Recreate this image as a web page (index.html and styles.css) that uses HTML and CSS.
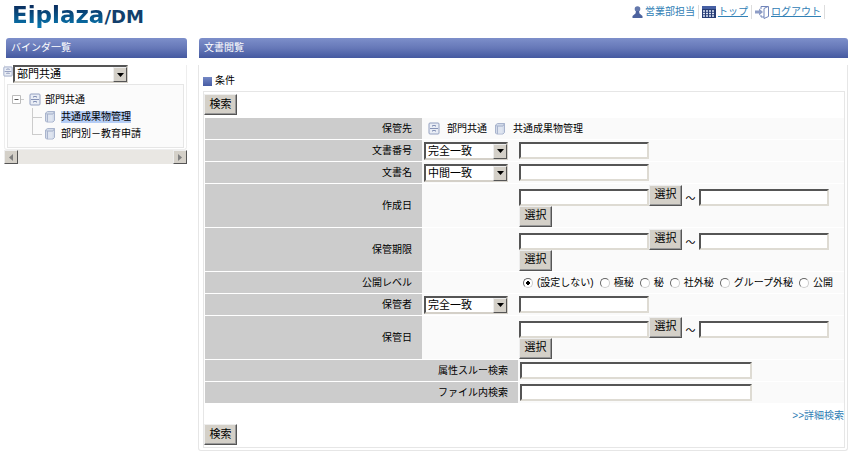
FILE: index.html
```html
<!DOCTYPE html>
<html lang="ja">
<head>
<meta charset="utf-8">
<title>Eiplaza/DM</title>
<link rel="stylesheet" href="styles.css">
</head>
<body>
<svg class="defs" width="0" height="0" aria-hidden="true">
  <symbol id="cabinet" viewBox="0 0 12 13">
    <rect x="1" y="1" width="10" height="11" rx="1" fill="#e9edf5" stroke="#93a0c0"/>
    <path d="M2 6.500h8M4.500 4.500v-1h3v1M4.500 9.500v-1h3v1" fill="none" stroke="#8592b6"/>
  </symbol>
  <symbol id="binder" viewBox="0 0 12 13">
    <path d="M1.500 3l2-1.500h7v9L9 12H2.500l-1-1z" fill="#d3dbe9" stroke="#a9b4cd"/>
    <path d="M1.500 3l1 1H9l1.500-2.500M3.500 4v8" fill="none" stroke="#a9b4cd"/>
    <path d="M4 5h4.500v6.500H4z" fill="#dfe5f0"/>
  </symbol>
  <symbol id="down" viewBox="0 0 7 4"><path d="M0 0h7L3.500 4z" fill="#000"/></symbol>
</svg>
<header class="top">
  <h1 class="logo"><span class="brand">Eiplaza</span><span class="edition">/DM</span></h1>
  <nav class="links">
    <span class="link-item"><svg width="11" height="12" viewBox="0 0 11 12"><circle cx="5.500" cy="3" r="2.800" fill="#6478ac"/><path d="M4 5h3l.5 2.500L10.500 10v2H.5v-2l3-2.500z" fill="#4c629e"/></svg><span>営業部担当</span></span>
    <span class="link-item"><svg width="14" height="12" viewBox="0 0 14 12"><path d="M0 0h14v12H0z" fill="#263c74"/><path d="M0 0h14v3H0z" fill="#4660a4"/><path d="M1 5h12M1 7.500h12M1 10h12" stroke="#e1e7f5" stroke-width="1.500" stroke-dasharray="2 1"/></svg><a href="#">トップ</a></span>
    <span class="link-item"><svg width="14" height="13" viewBox="0 0 14 13"><path d="M6 3V.5h7.500v10L9 12.500V2.500L13 .5M6 9v2h3" fill="none" stroke="#7185ba"/><path d="M0 4.500h4V2.500l4 3.500-4 3.500v-2H0z" fill="#8e9dc6"/></svg><a href="#">ログアウト</a></span>
  </nav>
</header>
<div class="columns">
  <aside class="sidebar">
    <h2 class="bar">バインダ一覧</h2>
    <div class="side-body">
      <div class="chooser">
        <svg width="10" height="13"><use href="#cabinet"/></svg>
        <span class="select select-side"><select aria-label="バインダ"><option>部門共通</option></select><span class="arrow"><svg width="7" height="4"><use href="#down"/></svg></span></span>
      </div>
      <div class="tree">
        <div class="node root"><svg width="12" height="9" viewBox="0 0 12 9"><path d="M.5.500h8v8h-8z" fill="#fff" stroke="#bbb"/><path d="M2.500 4.500h4" stroke="#555"/><path d="M9 4.500h3" stroke="#ccc"/></svg><svg width="12" height="13"><use href="#cabinet"/></svg><span>部門共通</span></div>
        <ul>
          <li class="node"><svg width="12" height="13"><use href="#binder"/></svg><span class="current">共通成果物管理</span></li>
          <li class="node"><svg width="12" height="13"><use href="#binder"/></svg><span>部門別－教育申請</span></li>
        </ul>
      </div>
    </div>
    <div class="scroll">
      <button type="button" aria-label="左へ"><svg width="4" height="7" viewBox="0 0 4 7"><path d="M4 0v7L0 3.500z" fill="#808080"/></svg></button>
      <button type="button" aria-label="右へ"><svg width="4" height="7" viewBox="0 0 4 7"><path d="M0 0v7l4-3.500z" fill="#808080"/></svg></button>
    </div>
  </aside>
  <main>
    <h2 class="bar">文書閲覧</h2>
    <form class="panel">
      <h3>条件</h3>
      <div class="box">
        <button type="button" class="btn">検索</button>
        <table>
          <colgroup><col class="c-label"><col class="c-mode"><col></colgroup>
          <tr><th scope="row">保管先</th><td colspan="2"><span class="path"><svg width="12" height="13"><use href="#cabinet"/></svg><span>部門共通</span><svg width="12" height="13"><use href="#binder"/></svg><span>共通成果物管理</span></span></td></tr>
          <tr><th scope="row"><label for="no">文書番号</label></th><td><span class="select"><select aria-label="文書番号の一致"><option>完全一致</option></select><span class="arrow"><svg width="7" height="4"><use href="#down"/></svg></span></span></td><td><input id="no" type="text"></td></tr>
          <tr><th scope="row"><label for="name">文書名</label></th><td><span class="select"><select aria-label="文書名の一致"><option>中間一致</option></select><span class="arrow"><svg width="7" height="4"><use href="#down"/></svg></span></span></td><td><input id="name" type="text"></td></tr>
          <tr class="tall"><th scope="row"><label for="made">作成日</label></th><td></td><td><div class="range"><input id="made" type="text"><button type="button" class="btn">選択</button><span class="tilde">～</span><input type="text" aria-label="作成日の終わり"></div><button type="button" class="btn">選択</button></td></tr>
          <tr class="tall"><th scope="row"><label for="limit">保管期限</label></th><td></td><td><div class="range"><input id="limit" type="text"><button type="button" class="btn">選択</button><span class="tilde">～</span><input type="text" aria-label="保管期限の終わり"></div><button type="button" class="btn">選択</button></td></tr>
          <tr><th scope="row">公開レベル</th><td></td><td><div class="radios"><label><input type="radio" name="lv" checked>(設定しない)</label><label><input type="radio" name="lv">極秘</label><label><input type="radio" name="lv">秘</label><label><input type="radio" name="lv">社外秘</label><label><input type="radio" name="lv">グループ外秘</label><label><input type="radio" name="lv">公開</label></div></td></tr>
          <tr><th scope="row"><label for="keeper">保管者</label></th><td><span class="select"><select aria-label="保管者の一致"><option>完全一致</option></select><span class="arrow"><svg width="7" height="4"><use href="#down"/></svg></span></span></td><td><input id="keeper" type="text"></td></tr>
          <tr class="tall"><th scope="row"><label for="kept">保管日</label></th><td></td><td><div class="range"><input id="kept" type="text"><button type="button" class="btn">選択</button><span class="tilde">～</span><input type="text" aria-label="保管日の終わり"></div><button type="button" class="btn">選択</button></td></tr>
          <tr><th scope="row" colspan="2"><label for="attr">属性スルー検索</label></th><td><input class="long" id="attr" type="text"></td></tr>
          <tr><th scope="row" colspan="2"><label for="infile">ファイル内検索</label></th><td><input class="long" id="infile" type="text"></td></tr>
        </table>
        <a class="detail" href="#">&gt;&gt;詳細検索</a>
        <button type="button" class="btn">検索</button>
      </div>
    </form>
  </main>
</div>
</body>
</html>
```
FILE: styles.css
```css
* { box-sizing: border-box; }
body {
  margin: 0;
  background: #fff;
  color: #000;
  font: 10px/14px "Liberation Sans", "Noto Sans CJK JP", sans-serif;
}
svg { display: block; flex: none; }
.defs { position: absolute; }
h1, h2, h3, ul { margin: 0; padding: 0; font-weight: normal; }
button, select, input { font: inherit; color: inherit; margin: 0; }

.top {
  display: flex;
  justify-content: space-between;
  align-items: flex-start;
  height: 38px;
  padding: 0 25px 0 12px;
}
.logo {
  display: flex;
  align-items: baseline;
  font: bold 23px/30px "DejaVu Sans", sans-serif;
}
.brand {
  background: linear-gradient(#0a2f60 20%, #0878b0 90%);
  background-clip: text;
  color: transparent;
}
.edition { color: #123f6c; font-size: 18px; }
.links { display: flex; padding-top: 5px; color: #3180b5; }
.links a { color: #3180b5; }
.link-item {
  display: flex;
  align-items: center;
  gap: 2px;
  padding: 0 3px;
  border-right: 1px solid #ddd;
}

.columns {
  display: grid;
  grid-template-columns: 183px minmax(0, 1fr);
  column-gap: 11px;
  align-items: start;
  padding: 0 2px 0 4px;
}
.bar {
  height: 20px;
  padding: 0 5px;
  border-radius: 3px 3px 0 0;
  background: linear-gradient(#7d8fca, #6678b8 50%, #4459a0);
  color: #fff;
  font-size: 10px;
  line-height: 20px;
}
.sidebar .bar { margin-left: 2px; }
.side-body {
  margin-top: 7px;
  padding: 0 2px 1px;
  border: solid #eee;
  border-width: 0 1px 1px;
  border-radius: 0 0 3px 3px;
}
.chooser { display: flex; margin-left: -4px; }
.select {
  position: relative;
  display: block;
  width: 84px;
  height: 18px;
}
.select-side { width: 115px; }
.select select {
  display: block;
  width: 100%;
  height: 18px;
  padding: 0 0 0 2px;
  appearance: none;
  background: #fff;
  border: 2px solid;
  border-color: #555 #d4d0c8 #d4d0c8 #555;
  border-radius: 0;
  font-size: 11px;
  line-height: 14px;
}
.arrow {
  position: absolute;
  top: 2px;
  right: 1px;
  display: flex;
  align-items: center;
  justify-content: center;
  width: 14px;
  height: 15px;
  border: 1px solid;
  border-color: #eee #555 #555 #eee;
  background: #d4d0c8;
  pointer-events: none;
}
.tree {
  margin-top: 1px;
  padding: 6px 4px 5px;
  border: 1px solid #e6e6e6;
  background: #fbfbfb;
}
.node { display: flex; align-items: center; height: 17px; gap: 5px; }
.root svg + svg { margin-right: -1px; }
.tree ul { list-style: none; padding-left: 20px; }
.tree li { position: relative; padding-left: 12px; }
.tree li::before {
  content: "";
  position: absolute;
  left: 0;
  top: 0;
  width: 9px;
  height: 9px;
  border: solid #ccc;
  border-width: 0 0 1px 1px;
}
.tree li:last-child::before { top: -8px; height: 17px; }
.current { background: #b5cdf5; line-height: 12px; }
.scroll {
  display: flex;
  justify-content: space-between;
  height: 14px;
  background: #e9e7e3;
}
.scroll button {
  display: flex;
  align-items: center;
  justify-content: center;
  width: 14px;
  height: 14px;
  padding: 0;
  border: 1px solid;
  border-color: #eee #555 #555 #eee;
  background: #d4d0c8;
}

main .bar { margin-left: 1px; }
.panel {
  margin-top: 7px;
  padding: 9px 2px 2px 4px;
  border: solid #e6e6e6;
  border-width: 0 1px 1px;
  border-radius: 0 0 3px 3px;
}
h3 {
  display: flex;
  align-items: center;
  gap: 3px;
  font-size: 10px;
  line-height: 14px;
}
h3::before {
  content: "";
  width: 9px;
  height: 9px;
  background: linear-gradient(#7488c5, #465ba3);
}
.box {
  margin-top: 3px;
  padding: 2px 0;
  border: 1px solid #e6e6e6;
}
.btn {
  display: block;
  width: 33px;
  height: 21px;
  padding: 0 0 2px;
  border: 1px solid;
  border-color: #eee #555 #555 #eee;
  border-radius: 0;
  box-shadow: inset -1px -1px #999;
  background: #d4d0c8;
  font-size: 11px;
  line-height: 16px;
}
table {
  width: calc(100% - 1px);
  margin: 3px 0 0 1px;
  border-spacing: 0;
  table-layout: fixed;
}
.c-label { width: 217px; }
.c-mode { width: 96px; }
th, td {
  height: 22px;
  padding: 0;
  border-bottom: 1px solid #fff;
  vertical-align: middle;
}
.tall th, .tall td { height: 44px; }
th {
  padding-right: 10px;
  background: #ccc;
  font-weight: normal;
  text-align: right;
}
td { padding-left: 2px; background: #fafafa; }
td:nth-child(3) { padding-left: 1px; }
.path { display: flex; align-items: center; gap: 7px; padding-left: 4px; }
td input[type="text"] {
  display: block;
  width: 130px;
  height: 17px;
  padding: 0 2px;
  border: 2px solid;
  border-color: #555 #dedbd3 #dedbd3 #555;
  background: #fff;
}
td input.long { width: 232px; }
.range { display: flex; align-items: flex-end; }
.tilde { width: 17px; text-align: center; }
.radios { display: flex; gap: 6px; padding-left: 4px; white-space: nowrap; }
.radios label { display: flex; align-items: center; gap: 4px; }
.radios input {
  appearance: none;
  width: 10px;
  height: 10px;
  border: 1px solid;
  border-color: #666 #ccc #ccc #666;
  border-radius: 50%;
  background: #fff;
}
.radios input:checked { background: radial-gradient(circle, #000 2px, #fff 2px); }
.detail {
  display: block;
  margin: 5px 0 1px;
  color: #3180b5;
  text-align: right;
  text-decoration: none;
}
```
